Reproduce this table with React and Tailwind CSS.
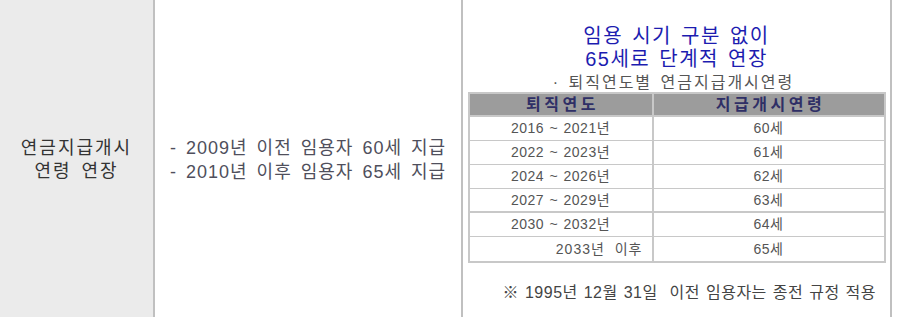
const rows = [
  { years: '2016 ~ 2021년', age: '60세' },
  { years: '2022 ~ 2023년', age: '61세' },
  { years: '2024 ~ 2026년', age: '62세' },
  { years: '2027 ~ 2029년', age: '63세', thick: true },
  { years: '2030 ~ 2032년', age: '64세' },
  { years: '2033년 이후', age: '65세', right: true },
]

export default function App() {
  return (
    <div className="w-[897px] h-[317px] bg-white flex font-['Liberation_Sans','Noto_Sans_CJK_KR',sans-serif]">
      {/* 항목 */}
      <div className="w-[153px] shrink-0 bg-[#ebebeb] flex flex-col items-center justify-center text-[18px] leading-[23px] tracking-[2px] [word-spacing:3px] text-[#333] pt-[2px]">
        <p>연금지급개시</p>
        <p>연령 연장</p>
      </div>
      <div className="w-[2px] bg-[#c0c0c0]" />

      {/* 현행 */}
      <div className="w-[306px] shrink-0 flex flex-col justify-center pl-[15px] text-[18px] leading-[24px] tracking-[1px] [word-spacing:3px] text-[#4f4f5c] pt-[2px]">
        <p>- 2009년 이전 임용자 60세 지급</p>
        <p>- 2010년 이후 임용자 65세 지급</p>
      </div>
      <div className="w-[2px] bg-[#c0c0c0]" />

      {/* 개정 */}
      <div className="w-[427px] shrink-0 flex flex-col items-center pt-[25px]">
        <div className="text-center text-[20px] leading-[23px] tracking-[1.5px] [word-spacing:2px] text-[#1c1cb0]">
          <p>임용 시기 구분 없이</p>
          <p>65세로 단계적 연장</p>
        </div>
        <p className="text-[16px] leading-[22px] tracking-[2px] [word-spacing:2px] text-[#555] mt-[1px] pr-[6px]">· 퇴직연도별 연금지급개시연령</p>

        <div className="w-[418px] -mt-[2px] border-2 border-[#c8c8c8] text-[14px] tracking-[0.5px] [word-spacing:1px] text-[#555]">
          <div className="flex h-[23px] bg-[#9c9c9c] text-[#2f2f66] text-[16px] font-bold tracking-[3.5px] border-b-2 border-[#c8c8c8]">
            <div className="w-[184px] flex items-center justify-center pl-[4px] border-r-2 border-[#c8c8c8]">퇴직연도</div>
            <div className="flex-1 flex items-center justify-center pl-[4px]">지급개시연령</div>
          </div>
          {rows.map((r, i) => (
            <div
              key={r.years}
              className={`flex h-[24px] ${i < rows.length - 1 ? (r.thick ? 'border-b-2' : 'border-b') : ''} border-[#c8c8c8]`}
            >
              <div className={`w-[184px] flex items-center border-r-2 border-[#c8c8c8] ${r.right ? 'justify-end pr-[9px] tracking-[1px] [word-spacing:5px]' : 'justify-center'}`}>
                {r.years}
              </div>
              <div className="flex-1 flex items-center justify-center">{r.age}</div>
            </div>
          ))}
        </div>

        <p className="self-end mr-[14px] mt-[20px] text-[16px] leading-[20px] tracking-[0.5px] [word-spacing:1px] text-[#444]">
          ※ 1995년 12월 31일&nbsp; 이전 임용자는 종전 규정 적용
        </p>
      </div>
      <div className="w-[2px] bg-[#c0c0c0]" />
    </div>
  )
}
